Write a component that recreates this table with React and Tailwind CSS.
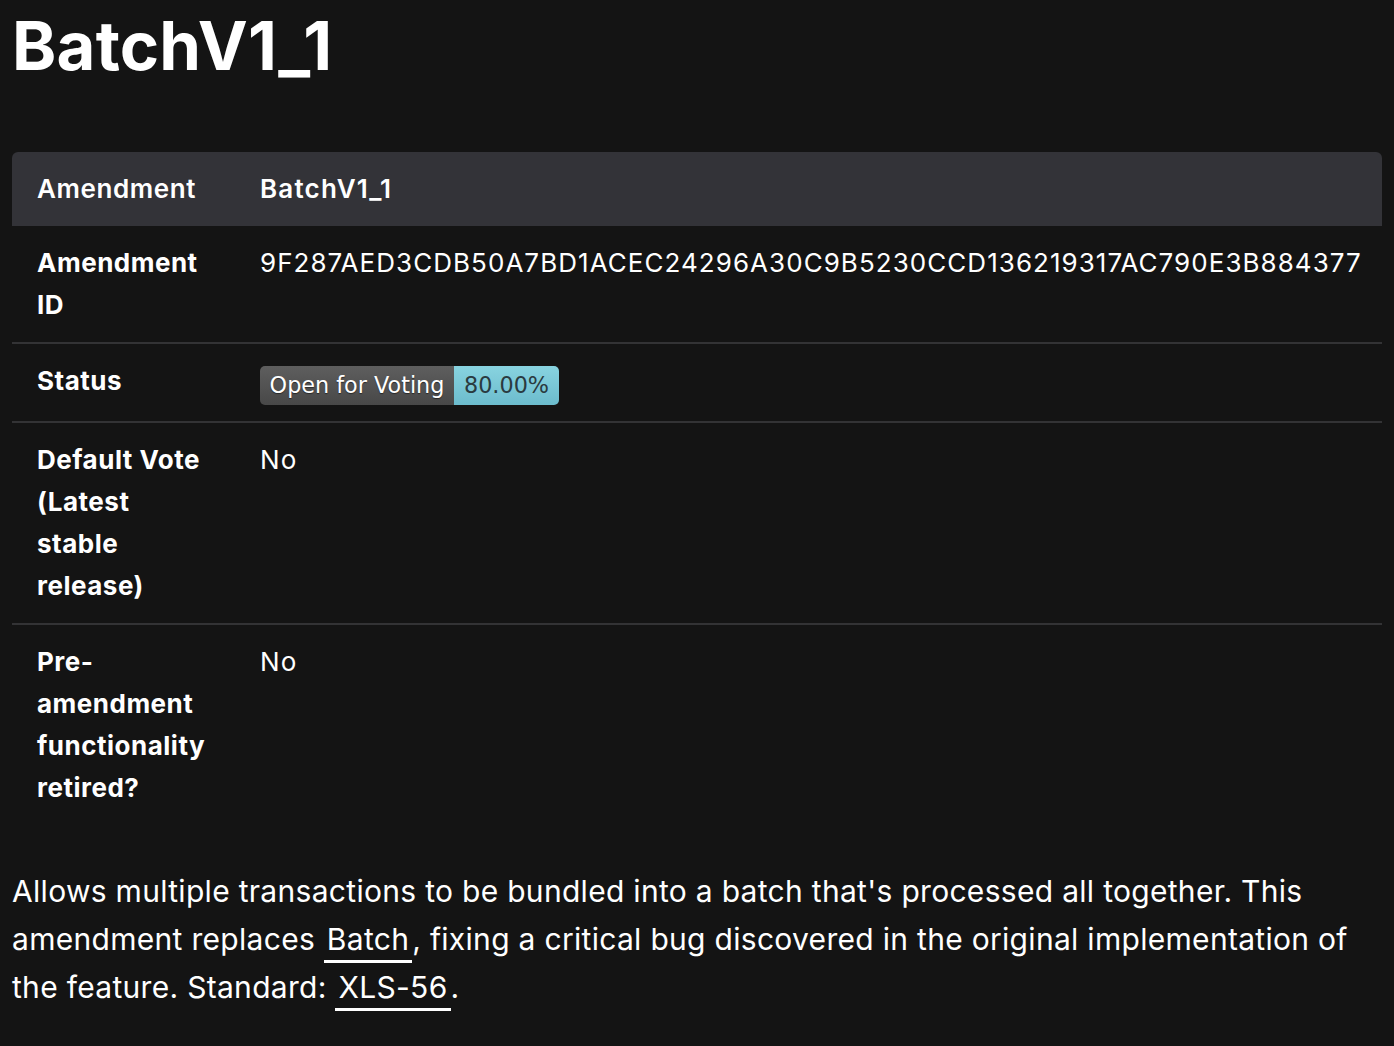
import React from "react";

const rows = [
  { label: "Amendment ID", value: "9F287AED3CDB50A7BD1ACEC24296A30C9B5230CCD136219317AC790E3B884377" },
  { label: "Status", badge: true },
  { label: "Default Vote (Latest stable release)", value: "No" },
  { label: "Pre-amendment functionality retired?", value: "No" },
];

const Badge = () => (
  <span className="inline-flex h-[39px] items-stretch overflow-hidden rounded-[5px] font-['DejaVu_Sans',Verdana,sans-serif] text-[22.3px] leading-none">
    <span className="flex w-[194px] items-center justify-center bg-gradient-to-b from-[#5e5e5e] to-[#484848] text-white [text-shadow:0_1px_1px_rgba(0,0,0,0.5)]">
      Open for Voting
    </span>
    <span className="flex w-[105px] items-center justify-center bg-gradient-to-b from-[#88d3e0] to-[#6cbccd] text-[#2a3a40]">
      80.00%
    </span>
  </span>
);

export default function App() {
  return (
    <div className="min-h-screen bg-[#141414] px-[12px] font-['Inter','Noto_Sans',sans-serif] text-white">
      <h1 className="pt-[6px] text-[67px] font-bold leading-[80px] tracking-[0.2px]">BatchV1_1</h1>

      <table className="mt-[66px] w-full table-fixed border-collapse text-[26px] leading-[42px]">
        <thead>
          <tr className="bg-[#333338]">
            <th className="w-[248px] rounded-tl-[6px] py-[16px] pl-[25px] pr-[51px] text-left align-top font-semibold tracking-[0.6px]">
              Amendment
            </th>
            <th className="rounded-tr-[6px] py-[16px] pr-[12px] text-left align-top font-semibold tracking-[1.2px]">
              BatchV1_1
            </th>
          </tr>
        </thead>
        <tbody>
          {rows.map((r, i) => (
            <tr key={r.label} className={i < rows.length - 1 ? "border-b-2 border-[#333335]" : ""}>
              <td className="py-[16px] pl-[25px] pr-[51px] align-top font-bold tracking-[0.5px]">
                {r.label}
              </td>
              <td className="py-[16px] pr-[12px] align-top tracking-[1.05px]">
                {r.badge ? (
                  <span className="inline-block pt-[3px] align-top tracking-normal">
                    <Badge />
                  </span>
                ) : (
                  r.value
                )}
              </td>
            </tr>
          ))}
        </tbody>
      </table>

      <p className="mt-[42px] text-[30px] leading-[48px] tracking-[0.3px]">
        Allows multiple transactions to be bundled into a batch that's processed all together. This
        amendment replaces{" "}
        <a href="#" className="border-b-[3px] border-white px-[3px] pb-[3px]">
          Batch
        </a>
        , fixing a critical bug discovered in the original implementation of the feature. Standard:{" "}
        <a href="#" className="border-b-[3px] border-white px-[3px] pb-[3px]">
          XLS-56
        </a>
        .
      </p>
    </div>
  );
}
